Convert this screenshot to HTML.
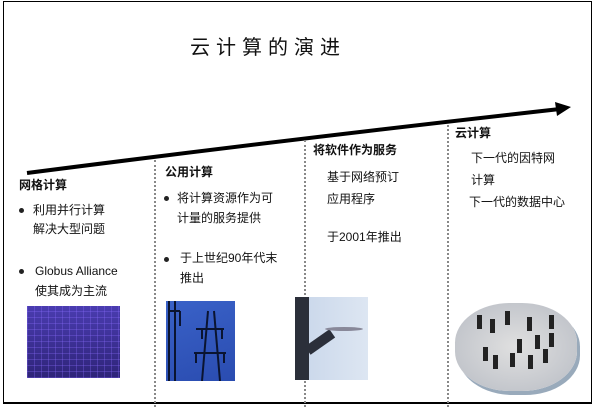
<!DOCTYPE html>
<html><head><meta charset="utf-8"><style>
body{margin:0;width:596px;height:407px;background:#fff;position:relative;overflow:hidden;font-family:"Liberation Sans","Noto Sans CJK SC",sans-serif;color:#111}
.b{position:absolute;left:3px;top:1px;width:589px;height:403px;border:1.5px solid #000;border-bottom-width:2px;box-sizing:border-box}
.t{position:absolute;white-space:nowrap;font-size:12px;line-height:18px}
.h{font-weight:bold}
.dot{position:absolute;width:5px;height:5px;border-radius:50%;background:#222}
.v{position:absolute;width:0;border-left:2px dotted #888;top:160px;bottom:0}
</style></head><body>
<div class="b"></div>
<div class="t" style="left:190px;top:36px;font-size:20px;line-height:24px;letter-spacing:6px">云计算的演进</div>
<svg style="position:absolute;left:0;top:0" width="596" height="407">
<path d="M27 173 Q 300 138 560 109" stroke="#000" stroke-width="4" fill="none"/>
<polygon points="555,102 571,107 557,116" fill="#000"/>
</svg>
<div class="v" style="left:154px"></div>
<div class="v" style="left:304px;top:140px"></div>
<div class="v" style="left:447px;top:125px"></div>

<div class="t h" style="left:19px;top:176px">网格计算</div>
<div class="dot" style="left:19px;top:208px"></div>
<div class="t" style="left:33px;top:201px;line-height:19px">利用并行计算<br>解决大型问题</div>
<div class="dot" style="left:19px;top:269px"></div>
<div class="t" style="left:35px;top:261px;line-height:20px">Globus Alliance<br>使其成为主流</div>

<div class="t h" style="left:165px;top:163px">公用计算</div>
<div class="dot" style="left:164px;top:196px"></div>
<div class="t" style="left:177px;top:188px;line-height:20px">将计算资源作为可<br>计量的服务提供</div>
<div class="dot" style="left:164px;top:257px"></div>
<div class="t" style="left:180px;top:248px;line-height:20px">于上世纪90年代末<br>推出</div>

<div class="t h" style="left:313px;top:141px">将软件作为服务</div>
<div class="t" style="left:327px;top:166px;line-height:22px">基于网络预订<br>应用程序</div>
<div class="t" style="left:327px;top:228px">于2001年推出</div>

<div class="t h" style="left:455px;top:124px">云计算</div>
<div class="t" style="left:471px;top:147px;line-height:22px">下一代的因特网<br>计算</div>
<div class="t" style="left:469px;top:193px">下一代的数据中心</div>

<div style="position:absolute;left:27px;top:306px;width:93px;height:72px;background:repeating-linear-gradient(90deg,rgba(140,110,255,.3) 0 1px,transparent 1px 7px),repeating-linear-gradient(0deg,rgba(140,110,255,.3) 0 1px,transparent 1px 6px),linear-gradient(#4a3cb0,#2e2478)"></div>
<div style="position:absolute;left:166px;top:301px;width:69px;height:80px;background:linear-gradient(160deg,#3a62c8,#2a4cb0)"><svg width="69" height="80"><g stroke="#0a1430" stroke-width="2" fill="none"><path d="M3 0V80M9 0V80M3 10H14M14 10V25"/><path d="M42 10L36 80M48 10L54 80M30 28H58M28 52H60M36 28V38M56 28V38M30 52V62M58 52V62"/></g></svg></div>
<div style="position:absolute;left:295px;top:297px;width:73px;height:83px;background:linear-gradient(90deg,#c8d6ea,#dde6f2)"><div style="position:absolute;left:0;top:0;width:14px;height:83px;background:#2b2f3a"></div><div style="position:absolute;left:10px;top:40px;width:30px;height:10px;background:#2b2f3a;transform:rotate(-35deg)"></div><div style="position:absolute;left:30px;top:30px;width:38px;height:4px;background:#889;border-radius:50%"></div></div>
<div style="position:absolute;left:455px;top:303px;width:122px;height:88px;border-radius:45%;background:radial-gradient(#e0e0e0,#b8bcc4);box-shadow:3px 4px 0 #9ab"><svg width="122" height="88"><g fill="#222"><rect x="22" y="12" width="5" height="14"/><rect x="35" y="16" width="5" height="14"/><rect x="50" y="8" width="5" height="14"/><rect x="72" y="14" width="5" height="14"/><rect x="94" y="12" width="5" height="14"/><rect x="80" y="32" width="5" height="14"/><rect x="62" y="36" width="5" height="14"/><rect x="94" y="30" width="5" height="14"/><rect x="28" y="44" width="5" height="14"/><rect x="38" y="52" width="5" height="14"/><rect x="55" y="50" width="5" height="14"/><rect x="73" y="52" width="5" height="14"/><rect x="88" y="46" width="5" height="14"/></g></svg></div>
</body></html>
